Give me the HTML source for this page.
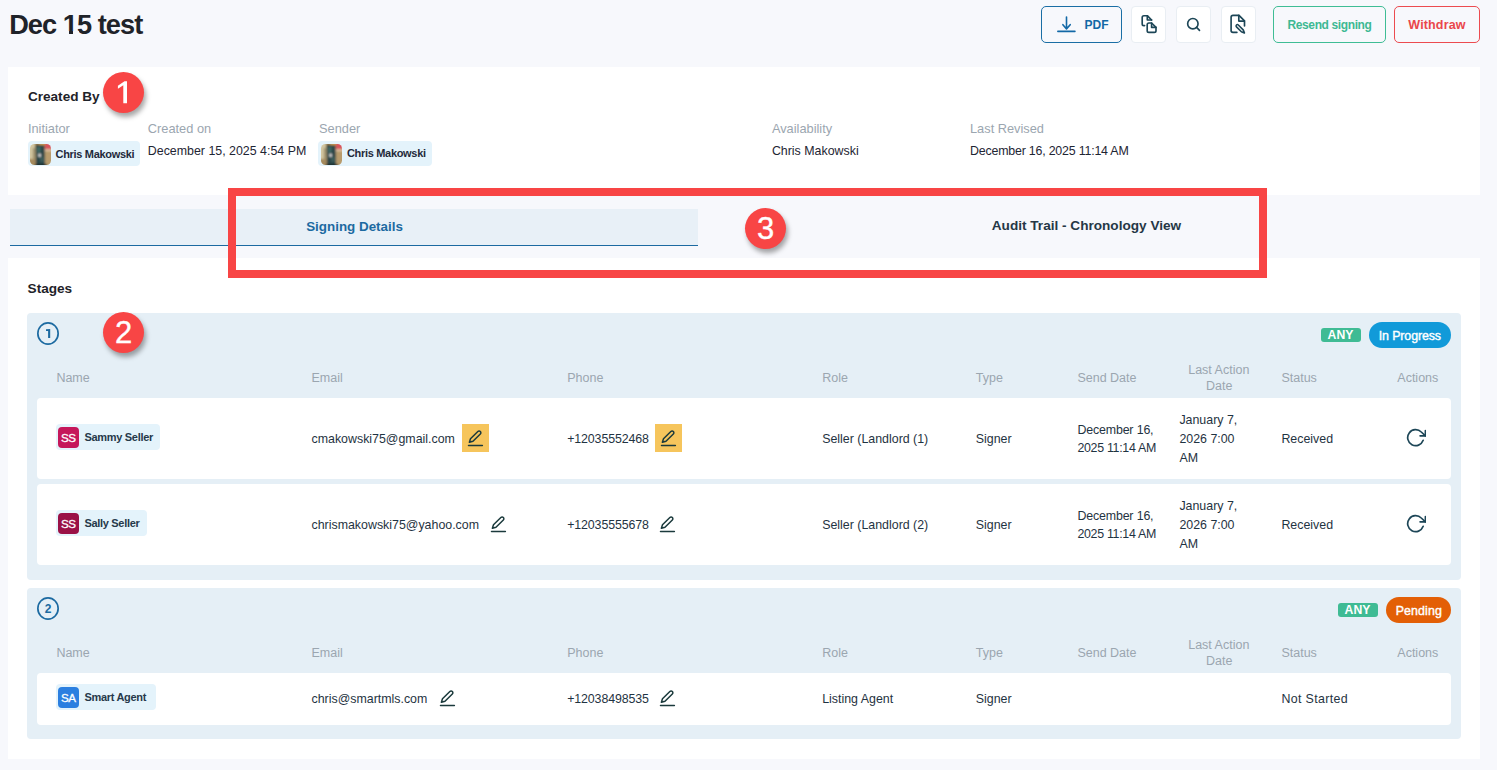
<!DOCTYPE html>
<html><head><meta charset="utf-8"><style>
html,body{margin:0;padding:0;}
body{width:1497px;height:770px;overflow:hidden;background:#f7f8fc;position:relative;font-family:"Liberation Sans",sans-serif;}
.t{position:absolute;white-space:nowrap;line-height:1;}
.r{position:absolute;}
.circ{width:20px;height:20px;border:1.5px solid #1c6aa1;border-radius:50%;color:#1c6aa1;font-size:10.5px;font-weight:700;text-align:center;line-height:20px;}
.ann{position:absolute;width:41px;height:41px;border-radius:50%;background:#f84545;color:#fff;font-size:31px;text-align:center;line-height:41px;-webkit-text-stroke:0.35px #fff;box-shadow:2px 4px 5px rgba(0,0,0,0.35);}
.av{width:21px;height:21px;border-radius:4px;color:#fff;font-size:11.6px;text-align:center;line-height:22px;letter-spacing:-0.5px;text-indent:-0.5px;-webkit-text-stroke:0.3px #fff;}
</style></head><body>
<div class="t" style="left:9.2px;top:10.98px;font-size:27.2px;font-weight:700;color:#1f2329;letter-spacing:-0.95px;">Dec 15 test</div>
<div class="r" style="left:63px;top:30.6px;width:6px;height:4px;background:#f7f8fc;"></div>
<div class="r" style="left:73px;top:30.6px;width:5.5px;height:4px;background:#f7f8fc;"></div>
<div class="r" style="left:1041px;top:6px;width:81px;height:37px;background:transparent;border:1px solid #1a6ea5;border-radius:5px;box-sizing:border-box;"></div>
<svg class="r" style="left:1055px;top:14px" width="22" height="20" viewBox="0 0 22 20">
<path d="M11.5 3.1 V14.8 M7.9 10.7 L11.5 14.9 L15.2 10.7" fill="none" stroke="#1268a6" stroke-width="1.6" stroke-linecap="round" stroke-linejoin="round"/>
<path d="M2.9 17.3 H19.9" stroke="#1268a6" stroke-width="1.7" stroke-linecap="round"/></svg>
<div class="t" style="left:1084.5px;top:18.84px;font-size:12px;font-weight:700;color:#1268a6;letter-spacing:0px;">PDF</div>
<div class="r" style="left:1130.5px;top:6px;width:35.7px;height:36.7px;background:#ffffff;border:1px solid #e9eef3;border-radius:4px;box-sizing:border-box;"></div>
<div class="r" style="left:1175.5px;top:6px;width:35.7px;height:36.7px;background:#ffffff;border:1px solid #e9eef3;border-radius:4px;box-sizing:border-box;"></div>
<div class="r" style="left:1220.5px;top:6px;width:35.7px;height:36.7px;background:#ffffff;border:1px solid #e9eef3;border-radius:4px;box-sizing:border-box;"></div>
<svg class="r" style="left:1134px;top:8px" width="30" height="32" viewBox="0 0 30 32">
<g fill="none" stroke="#1d4657" stroke-width="1.65" stroke-linecap="round" stroke-linejoin="round">
<path d="M10.6 17.6 H9.9 Q8.2 17.6 8.2 15.9 V9.4 Q8.2 7.7 9.9 7.7 H13.3 L17.6 12.0"/>
<path d="M13.3 7.7 V12.0 H17.6"/>
<path d="M14.9 15.0 H17.6 L22.0 19.4 V22.7 Q22.0 24.4 20.3 24.4 H14.9 Q13.2 24.4 13.2 22.7 V16.7 Q13.2 15.0 14.9 15.0 Z"/>
<path d="M17.6 15.0 V19.4 H22.0"/>
</g></svg>
<svg class="r" style="left:1176px;top:7px" width="35" height="35" viewBox="0 0 35 35">
<g fill="none" stroke="#1d4657" stroke-width="1.65" stroke-linecap="round">
<circle cx="16.85" cy="16.65" r="5.2"/><path d="M20.6 20.4 L23.5 23.3"/></g></svg>
<svg class="r" style="left:1224px;top:8px" width="30" height="32" viewBox="0 0 30 32">
<g fill="none" stroke="#1d4657" stroke-width="1.65" stroke-linecap="round" stroke-linejoin="round">
<path d="M12.9 24.4 H9.0 Q7.1 24.4 7.1 22.5 V9.2 Q7.1 7.3 9.0 7.3 H15.0 L20.5 12.8 V18.0"/>
<path d="M14.8 7.4 V13.1 H20.4"/>
<path d="M20.4 24.9 L19.22 21.88 L14.32 16.98 A1.3 1.3 0 0 0 12.48 18.82 L17.38 23.72 Z" stroke-width="1.6"/>
</g></svg>
<div class="r" style="left:1273px;top:6px;width:113px;height:37px;background:transparent;border:1px solid #3fbd95;border-radius:5px;box-sizing:border-box;"></div>
<div class="t" style="left:1287.5px;top:18.94px;font-size:12px;font-weight:700;color:#3db993;letter-spacing:-0.38px;">Resend signing</div>
<div class="r" style="left:1394px;top:6px;width:86px;height:37px;background:transparent;border:1px solid #ec4b50;border-radius:5px;box-sizing:border-box;"></div>
<div class="t" style="left:1408.3px;top:18.52px;font-size:12.5px;font-weight:700;color:#ea464b;letter-spacing:0.15px;">Withdraw</div>
<div class="r" style="left:8px;top:67px;width:1472px;height:128px;background:#ffffff;"></div>
<div class="t" style="left:27.9px;top:89.59px;font-size:13.6px;font-weight:700;color:#1f2329;letter-spacing:0px;">Created By</div>
<div class="t" style="left:27.9px;top:123.16px;font-size:12.8px;font-weight:400;color:#9ba6b0;letter-spacing:0px;">Initiator</div>
<div class="t" style="left:147.8px;top:123.16px;font-size:12.8px;font-weight:400;color:#9ba6b0;letter-spacing:0px;">Created on</div>
<div class="t" style="left:319.0px;top:122.76px;font-size:12.8px;font-weight:400;color:#9ba6b0;letter-spacing:0px;">Sender</div>
<div class="t" style="left:771.9px;top:122.96px;font-size:12.8px;font-weight:400;color:#9ba6b0;letter-spacing:0px;">Availability</div>
<div class="t" style="left:970.0px;top:122.96px;font-size:12.8px;font-weight:400;color:#9ba6b0;letter-spacing:0px;">Last Revised</div>
<div class="r" style="left:28px;top:141px;width:112px;height:25px;background:#e4f3fb;border-radius:4px;"></div>
<svg class="r" style="left:30px;top:144px" width="21" height="21" viewBox="0 0 21 21">
<defs><clipPath id="c30"><rect width="21" height="21" rx="4.5"/></clipPath><filter id="f30"><feGaussianBlur stdDeviation="0.8"/></filter></defs>
<g clip-path="url(#c30)"><g filter="url(#f30)"><rect x="-2" y="-2" width="25" height="25" fill="#b39a6e"/>
<rect x="-2" y="-2" width="7" height="25" fill="#d3c6a0"/>
<rect x="3" y="4" width="1.5" height="14" fill="#8a7a55"/>
<rect x="-2" y="15" width="8" height="8" fill="#a68a5c"/>
<rect x="5" y="-2" width="4" height="5" fill="#9a7a45"/>
<rect x="10" y="-2" width="6" height="4" fill="#d9a34f"/>
<rect x="15" y="-2" width="8" height="7.5" fill="#d9525c"/>
<rect x="15" y="5.5" width="8" height="1.5" fill="#e6d2b2"/>
<rect x="16" y="7" width="6" height="16" fill="#b89b6c"/>
<path d="M5.5 1 L14.5 1 L15 22 L6 22 Z" fill="#2c4446"/>
<path d="M7 3 L11 3 L10 9 L7.5 9 Z" fill="#3f6a66"/>
<rect x="10" y="13" width="4" height="5" fill="#3a5c5a"/>
<ellipse cx="9.6" cy="11.2" rx="1.2" ry="1.7" fill="#f2eef0"/>
<rect x="5" y="20" width="12" height="3" fill="#1e2a2a"/>
</g></g></svg>
<div class="t" style="left:55.6px;top:148.99px;font-size:11px;font-weight:700;color:#1f2a3a;letter-spacing:-0.32px;">Chris Makowski</div>
<div class="t" style="left:147.8px;top:144.50px;font-size:12.4px;font-weight:400;color:#1e2533;letter-spacing:0px;">December 15, 2025 4:54 PM</div>
<div class="r" style="left:318px;top:141px;width:114px;height:25px;background:#e4f3fb;border-radius:4px;"></div>
<svg class="r" style="left:321px;top:144px" width="21" height="21" viewBox="0 0 21 21">
<defs><clipPath id="c321"><rect width="21" height="21" rx="4.5"/></clipPath><filter id="f321"><feGaussianBlur stdDeviation="0.8"/></filter></defs>
<g clip-path="url(#c321)"><g filter="url(#f321)"><rect x="-2" y="-2" width="25" height="25" fill="#b39a6e"/>
<rect x="-2" y="-2" width="7" height="25" fill="#d3c6a0"/>
<rect x="3" y="4" width="1.5" height="14" fill="#8a7a55"/>
<rect x="-2" y="15" width="8" height="8" fill="#a68a5c"/>
<rect x="5" y="-2" width="4" height="5" fill="#9a7a45"/>
<rect x="10" y="-2" width="6" height="4" fill="#d9a34f"/>
<rect x="15" y="-2" width="8" height="7.5" fill="#d9525c"/>
<rect x="15" y="5.5" width="8" height="1.5" fill="#e6d2b2"/>
<rect x="16" y="7" width="6" height="16" fill="#b89b6c"/>
<path d="M5.5 1 L14.5 1 L15 22 L6 22 Z" fill="#2c4446"/>
<path d="M7 3 L11 3 L10 9 L7.5 9 Z" fill="#3f6a66"/>
<rect x="10" y="13" width="4" height="5" fill="#3a5c5a"/>
<ellipse cx="9.6" cy="11.2" rx="1.2" ry="1.7" fill="#f2eef0"/>
<rect x="5" y="20" width="12" height="3" fill="#1e2a2a"/>
</g></g></svg>
<div class="t" style="left:347.0px;top:148.49px;font-size:11px;font-weight:700;color:#1f2a3a;letter-spacing:-0.32px;">Chris Makowski</div>
<div class="t" style="left:771.9px;top:144.90px;font-size:12.4px;font-weight:400;color:#1e2533;letter-spacing:0px;">Chris Makowski</div>
<div class="t" style="left:970.0px;top:144.90px;font-size:12.4px;font-weight:400;color:#1e2533;letter-spacing:-0.2px;">December 16, 2025 11:14 AM</div>
<div class="r" style="left:10px;top:209px;width:688px;height:36px;background:#e8f0f7;"></div>
<div class="r" style="left:10px;top:245px;width:688px;height:1px;background:#1c6aa1;"></div>
<div class="t" style="left:306.2px;top:219.66px;font-size:13.4px;font-weight:700;color:#1c6aa1;letter-spacing:0px;">Signing Details</div>
<div class="t" style="left:991.8px;top:219.49px;font-size:13.6px;font-weight:700;color:#253746;letter-spacing:0px;">Audit Trail - Chronology View</div>
<div class="r" style="left:8px;top:258px;width:1472px;height:500.5px;background:#ffffff;"></div>
<div class="t" style="left:27.6px;top:281.79px;font-size:13.6px;font-weight:700;color:#1f2329;letter-spacing:0px;">Stages</div>
<div class="r" style="left:27px;top:313px;width:1434px;height:267px;background:#e5eff6;border-radius:4px;"></div>
<svg class="r" style="left:37px;top:322px" width="22" height="23"><ellipse cx="11" cy="11.5" rx="10.15" ry="10.65" fill="none" stroke="#1c6aa1" stroke-width="1.7"/><path d="M9.0 7.2 L13.2 6.9 L13.2 16.0 L11.1 16.0 L11.1 9.1 L9.0 9.1 Z" fill="#1c6aa1"/></svg>
<div class="r" style="left:1321px;top:328px;width:40px;height:14px;background:#3fbb94;border-radius:3px;"></div>
<div class="t" style="left:1327.6px;top:329.27px;font-size:12.2px;font-weight:700;color:#ffffff;letter-spacing:0.05px;">ANY</div>
<div class="r" style="left:1369px;top:322px;width:82px;height:26px;background:#119ad9;border-radius:13px;"></div>
<div class="t" style="left:1378.7px;top:329.50px;font-size:12.4px;font-weight:400;color:#ffffff;letter-spacing:-0.1px;-webkit-text-stroke:0.4px #fff;">In Progress</div>
<div class="t" style="left:56.4px;top:371.72px;font-size:12.5px;font-weight:400;color:#9ba6b0;letter-spacing:0px;">Name</div>
<div class="t" style="left:311.5px;top:371.72px;font-size:12.5px;font-weight:400;color:#9ba6b0;letter-spacing:0px;">Email</div>
<div class="t" style="left:567.2px;top:371.72px;font-size:12.5px;font-weight:400;color:#9ba6b0;letter-spacing:0px;">Phone</div>
<div class="t" style="left:822.2px;top:371.72px;font-size:12.5px;font-weight:400;color:#9ba6b0;letter-spacing:0px;">Role</div>
<div class="t" style="left:975.8px;top:371.72px;font-size:12.5px;font-weight:400;color:#9ba6b0;letter-spacing:0px;">Type</div>
<div class="t" style="left:1077.4px;top:371.72px;font-size:12.5px;font-weight:400;color:#9ba6b0;letter-spacing:0px;">Send Date</div>
<div class="t" style="left:1281.4px;top:371.72px;font-size:12.5px;font-weight:400;color:#9ba6b0;letter-spacing:0px;">Status</div>
<div class="t" style="left:1397.3px;top:371.72px;font-size:12.5px;font-weight:400;color:#9ba6b0;letter-spacing:0px;">Actions</div>
<div class="t" style="left:1188.2px;top:363.92px;font-size:12.5px;font-weight:400;color:#9ba6b0;letter-spacing:0px;">Last Action</div>
<div class="t" style="left:1206.0px;top:379.92px;font-size:12.5px;font-weight:400;color:#9ba6b0;letter-spacing:0px;">Date</div>
<div class="r" style="left:27px;top:588px;width:1434px;height:151px;background:#e5eff6;border-radius:4px;"></div>
<svg class="r" style="left:37px;top:597px" width="22" height="23"><ellipse cx="11" cy="11.5" rx="10.15" ry="10.65" fill="none" stroke="#1c6aa1" stroke-width="1.7"/><text x="11.1" y="16.0" text-anchor="middle" font-family="Liberation Sans" font-weight="700" font-size="12" fill="#1c6aa1">2</text></svg>
<div class="r" style="left:1338px;top:603px;width:40px;height:14px;background:#3fbb94;border-radius:3px;"></div>
<div class="t" style="left:1344.6px;top:604.27px;font-size:12.2px;font-weight:700;color:#ffffff;letter-spacing:0.05px;">ANY</div>
<div class="r" style="left:1386px;top:597px;width:65px;height:26px;background:#e35f06;border-radius:13px;"></div>
<div class="t" style="left:1395.7px;top:604.50px;font-size:12.4px;font-weight:400;color:#ffffff;letter-spacing:0.12px;-webkit-text-stroke:0.4px #fff;">Pending</div>
<div class="t" style="left:56.4px;top:646.72px;font-size:12.5px;font-weight:400;color:#9ba6b0;letter-spacing:0px;">Name</div>
<div class="t" style="left:311.5px;top:646.72px;font-size:12.5px;font-weight:400;color:#9ba6b0;letter-spacing:0px;">Email</div>
<div class="t" style="left:567.2px;top:646.72px;font-size:12.5px;font-weight:400;color:#9ba6b0;letter-spacing:0px;">Phone</div>
<div class="t" style="left:822.2px;top:646.72px;font-size:12.5px;font-weight:400;color:#9ba6b0;letter-spacing:0px;">Role</div>
<div class="t" style="left:975.8px;top:646.72px;font-size:12.5px;font-weight:400;color:#9ba6b0;letter-spacing:0px;">Type</div>
<div class="t" style="left:1077.4px;top:646.72px;font-size:12.5px;font-weight:400;color:#9ba6b0;letter-spacing:0px;">Send Date</div>
<div class="t" style="left:1281.4px;top:646.72px;font-size:12.5px;font-weight:400;color:#9ba6b0;letter-spacing:0px;">Status</div>
<div class="t" style="left:1397.3px;top:646.72px;font-size:12.5px;font-weight:400;color:#9ba6b0;letter-spacing:0px;">Actions</div>
<div class="t" style="left:1188.2px;top:638.92px;font-size:12.5px;font-weight:400;color:#9ba6b0;letter-spacing:0px;">Last Action</div>
<div class="t" style="left:1206.0px;top:654.92px;font-size:12.5px;font-weight:400;color:#9ba6b0;letter-spacing:0px;">Date</div>
<div class="r" style="left:37px;top:398px;width:1414px;height:81px;background:#ffffff;border-radius:4px;"></div>
<div class="r" style="left:56px;top:424px;width:104px;height:26px;background:#e4f3fb;border-radius:4px;"></div>
<div class="r av" style="left:58px;top:426.5px;background:#c5175a;">SS</div>
<div class="t" style="left:84.4px;top:431.79px;font-size:11px;font-weight:700;color:#26394a;letter-spacing:-0.3px;">Sammy Seller</div>
<div class="t" style="left:311.5px;top:433.00px;font-size:12.4px;font-weight:400;color:#1f3342;letter-spacing:0px;">cmakowski75@gmail.com</div>
<div class="t" style="left:567.2px;top:433.00px;font-size:12.4px;font-weight:400;color:#1f3342;letter-spacing:-0.12px;">+12035552468</div>
<div class="r" style="left:462px;top:424px;width:27px;height:28px;background:#f6c55c;"></div>
<div class="r" style="left:655px;top:424px;width:27px;height:28px;background:#f6c55c;"></div>
<svg class="r" style="left:462px;top:424px" width="27" height="28" viewBox="0 0 27 28">
<g fill="none" stroke="#1b3a3c" stroke-width="1.5" stroke-linecap="round" stroke-linejoin="round">
<path d="M7.4 18.3 L8.49 14.73 L15.86 7.56 A1.75 1.75 0 0 1 18.34 10.04 L10.97 17.21 Z"/>
<path d="M6.5 21.5 H20.4"/></g></svg>
<svg class="r" style="left:655px;top:424px" width="27" height="28" viewBox="0 0 27 28">
<g fill="none" stroke="#1b3a3c" stroke-width="1.5" stroke-linecap="round" stroke-linejoin="round">
<path d="M7.4 18.3 L8.49 14.73 L15.86 7.56 A1.75 1.75 0 0 1 18.34 10.04 L10.97 17.21 Z"/>
<path d="M6.5 21.5 H20.4"/></g></svg>
<div class="t" style="left:822.2px;top:433.00px;font-size:12.4px;font-weight:400;color:#1f3342;letter-spacing:0px;">Seller (Landlord (1)</div>
<div class="t" style="left:975.8px;top:433.00px;font-size:12.4px;font-weight:400;color:#1f3342;letter-spacing:0px;">Signer</div>
<div class="t" style="left:1077.4px;top:423.60px;font-size:12.4px;font-weight:400;color:#1f3342;letter-spacing:-0.15px;">December 16,</div>
<div class="t" style="left:1077.4px;top:442.40px;font-size:12.4px;font-weight:400;color:#1f3342;letter-spacing:-0.3px;">2025 11:14 AM</div>
<div class="t" style="left:1179.4px;top:414.00px;font-size:12.4px;font-weight:400;color:#1f3342;letter-spacing:0px;">January 7,</div>
<div class="t" style="left:1179.4px;top:433.00px;font-size:12.4px;font-weight:400;color:#1f3342;letter-spacing:0px;">2026 7:00</div>
<div class="t" style="left:1179.4px;top:452.00px;font-size:12.4px;font-weight:400;color:#1f3342;letter-spacing:0px;">AM</div>
<div class="t" style="left:1281.4px;top:433.00px;font-size:12.4px;font-weight:400;color:#1f3342;letter-spacing:0px;">Received</div>
<svg class="r" style="left:1404.80px;top:427.20px" width="21.3" height="21.3" viewBox="0 0 24 24">
<g fill="none" stroke="#1d4657" stroke-width="1.9" stroke-linecap="round" stroke-linejoin="round">
<polyline points="23 4 23 10 17 10"/><path d="M20.49 15a9 9 0 1 1-2.12-9.36L23 10"/></g></svg>
<div class="r" style="left:37px;top:484px;width:1414px;height:81px;background:#ffffff;border-radius:4px;"></div>
<div class="r" style="left:56px;top:510px;width:91px;height:26px;background:#e4f3fb;border-radius:4px;"></div>
<div class="r av" style="left:58px;top:512.5px;background:#9a1146;">SS</div>
<div class="t" style="left:84.4px;top:517.79px;font-size:11px;font-weight:700;color:#26394a;letter-spacing:-0.3px;">Sally Seller</div>
<div class="t" style="left:311.5px;top:519.00px;font-size:12.4px;font-weight:400;color:#1f3342;letter-spacing:0px;">chrismakowski75@yahoo.com</div>
<div class="t" style="left:567.2px;top:519.00px;font-size:12.4px;font-weight:400;color:#1f3342;letter-spacing:-0.12px;">+12035555678</div>
<svg class="r" style="left:484.5px;top:510px" width="27" height="28" viewBox="0 0 27 28">
<g fill="none" stroke="#1b3a3c" stroke-width="1.5" stroke-linecap="round" stroke-linejoin="round">
<path d="M7.4 18.3 L8.49 14.73 L15.86 7.56 A1.75 1.75 0 0 1 18.34 10.04 L10.97 17.21 Z"/>
<path d="M6.5 21.5 H20.4"/></g></svg>
<svg class="r" style="left:654px;top:510px" width="27" height="28" viewBox="0 0 27 28">
<g fill="none" stroke="#1b3a3c" stroke-width="1.5" stroke-linecap="round" stroke-linejoin="round">
<path d="M7.4 18.3 L8.49 14.73 L15.86 7.56 A1.75 1.75 0 0 1 18.34 10.04 L10.97 17.21 Z"/>
<path d="M6.5 21.5 H20.4"/></g></svg>
<div class="t" style="left:822.2px;top:519.00px;font-size:12.4px;font-weight:400;color:#1f3342;letter-spacing:0px;">Seller (Landlord (2)</div>
<div class="t" style="left:975.8px;top:519.00px;font-size:12.4px;font-weight:400;color:#1f3342;letter-spacing:0px;">Signer</div>
<div class="t" style="left:1077.4px;top:509.60px;font-size:12.4px;font-weight:400;color:#1f3342;letter-spacing:-0.15px;">December 16,</div>
<div class="t" style="left:1077.4px;top:528.40px;font-size:12.4px;font-weight:400;color:#1f3342;letter-spacing:-0.3px;">2025 11:14 AM</div>
<div class="t" style="left:1179.4px;top:500.00px;font-size:12.4px;font-weight:400;color:#1f3342;letter-spacing:0px;">January 7,</div>
<div class="t" style="left:1179.4px;top:519.00px;font-size:12.4px;font-weight:400;color:#1f3342;letter-spacing:0px;">2026 7:00</div>
<div class="t" style="left:1179.4px;top:538.00px;font-size:12.4px;font-weight:400;color:#1f3342;letter-spacing:0px;">AM</div>
<div class="t" style="left:1281.4px;top:519.00px;font-size:12.4px;font-weight:400;color:#1f3342;letter-spacing:0px;">Received</div>
<svg class="r" style="left:1404.80px;top:513.20px" width="21.3" height="21.3" viewBox="0 0 24 24">
<g fill="none" stroke="#1d4657" stroke-width="1.9" stroke-linecap="round" stroke-linejoin="round">
<polyline points="23 4 23 10 17 10"/><path d="M20.49 15a9 9 0 1 1-2.12-9.36L23 10"/></g></svg>
<div class="r" style="left:37px;top:673px;width:1414px;height:52px;background:#ffffff;border-radius:4px;"></div>
<div class="r" style="left:56px;top:684px;width:100px;height:26px;background:#e4f3fb;border-radius:4px;"></div>
<div class="r av" style="left:58px;top:686.5px;background:#2b7fe0;">SA</div>
<div class="t" style="left:84.4px;top:692.29px;font-size:11px;font-weight:700;color:#26394a;letter-spacing:-0.3px;">Smart Agent</div>
<div class="t" style="left:311.5px;top:692.80px;font-size:12.4px;font-weight:400;color:#1f3342;letter-spacing:0px;">chris@smartmls.com</div>
<div class="t" style="left:567.2px;top:692.80px;font-size:12.4px;font-weight:400;color:#1f3342;letter-spacing:-0.12px;">+12038498535</div>
<svg class="r" style="left:434px;top:684px" width="27" height="28" viewBox="0 0 27 28">
<g fill="none" stroke="#1b3a3c" stroke-width="1.5" stroke-linecap="round" stroke-linejoin="round">
<path d="M7.4 18.3 L8.49 14.73 L15.86 7.56 A1.75 1.75 0 0 1 18.34 10.04 L10.97 17.21 Z"/>
<path d="M6.5 21.5 H20.4"/></g></svg>
<svg class="r" style="left:654.4px;top:684px" width="27" height="28" viewBox="0 0 27 28">
<g fill="none" stroke="#1b3a3c" stroke-width="1.5" stroke-linecap="round" stroke-linejoin="round">
<path d="M7.4 18.3 L8.49 14.73 L15.86 7.56 A1.75 1.75 0 0 1 18.34 10.04 L10.97 17.21 Z"/>
<path d="M6.5 21.5 H20.4"/></g></svg>
<div class="t" style="left:822.2px;top:692.80px;font-size:12.4px;font-weight:400;color:#1f3342;letter-spacing:0px;">Listing Agent</div>
<div class="t" style="left:975.8px;top:692.80px;font-size:12.4px;font-weight:400;color:#1f3342;letter-spacing:0px;">Signer</div>
<div class="t" style="left:1281.4px;top:692.80px;font-size:12.4px;font-weight:400;color:#1f3342;letter-spacing:0.35px;">Not Started</div>
<div class="r" style="left:228px;top:188px;width:1039px;height:90px;border:8px solid #f84545;box-sizing:border-box;"></div>
<div class="ann" style="left:103.1px;top:71.8px;"><svg width="41" height="41" style="position:absolute;left:0;top:0"><path d="M21.5 9.2 L24.0 9.2 L24.0 31.2 L20.3 31.2 L20.3 13.3 L14.9 16.7 L14.9 13.8 Z" fill="#fff"/></svg></div>
<div class="ann" style="left:103.1px;top:311.8px;">2</div>
<div class="ann" style="left:745.0px;top:207.9px;">3</div>
</body></html>
